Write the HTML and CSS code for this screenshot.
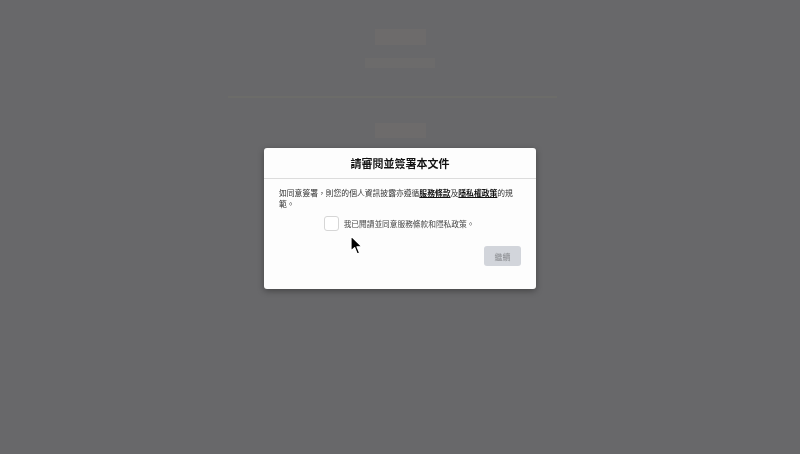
FILE: index.html
```html
<!DOCTYPE html>
<html>
<head>
  <link rel="stylesheet" href="styles.css">
</head>
<body>
  <div class="page">
    <div class="page-logo"></div>
    <div class="page-subtitle"></div>
    <div class="page-rule"></div>
    <div class="page-logo page-logo-low"></div>
  </div>

  <div class="overlay">
    <div class="modal">
      <div class="modal-header">請審閱並簽署本文件</div>
      <div class="modal-body">
        <p class="notice">如同意簽署，則您的個人資訊披露亦遵循<a href="#">服務條款</a>及<a href="#">隱私權政策</a>的規範。</p>
        <div class="agree-row">
          <span class="checkbox"></span>
          <label>我已閱讀並同意服務條款和隱私政策。</label>
        </div>
        <div class="actions">
          <button class="continue" disabled>繼續</button>
        </div>
      </div>
    </div>
  </div>

  <svg class="cursor" width="14" height="21" viewBox="0 0 14 21">
    <path d="M1 1 L1 16 L4.6 12.6 L7.2 19 L9.6 18 L7 11.8 L12 11.8 Z" fill="#000" stroke="#fff" stroke-width="1.2" stroke-linejoin="round"/>
  </svg>
</body>
</html>
```

FILE: styles.css
```css
body {
  margin: 0;
  font-family: "Noto Sans CJK TC", "Noto Sans", sans-serif;
  background: #68686a;
  height: 100vh;
  overflow: hidden;
}

.page {
  display: flex;
  flex-direction: column;
  align-items: center;
  padding-top: 29px;
}

.page-logo {
  width: 51px;
  height: 16px;
  background: #6d6b6b;
  margin-left: 1px;
}

.page-subtitle {
  width: 70px;
  height: 10px;
  margin-top: 13px;
  background: #6c6b6b;
}

.page-rule {
  width: 329px;
  height: 2px;
  margin-top: 28px;
  margin-right: 15px;
  background: #6c6c69;
}

.page-logo-low {
  margin-top: 25px;
  height: 15px;
}

.overlay {
  position: fixed;
  inset: 0;
  display: flex;
  justify-content: center;
  padding-top: 148px;
}

.modal {
  width: 272px;
  height: 141px;
  background: #fdfdfd;
  border-radius: 3px;
  box-shadow: 0 2px 6px rgba(0, 0, 0, 0.35);
  display: flex;
  flex-direction: column;
  align-self: flex-start;
}

.modal-header {
  height: 30px;
  line-height: 30px;
  text-align: center;
  font-size: 11px;
  font-weight: 700;
  color: #111;
  border-bottom: 1px solid #dcdcdc;
}

.modal-body {
  padding: 8px 15px 0;
}

.notice {
  margin: 0;
  font-size: 7.8px;
  line-height: 11px;
  color: #333;
}

.notice a {
  color: #111;
  font-weight: 700;
  text-decoration: underline;
}

.agree-row {
  display: flex;
  align-items: center;
  justify-content: center;
  margin-top: 7px;
  gap: 5px;
  margin-right: 2px;
}

.checkbox {
  width: 13px;
  height: 13px;
  border: 1px solid #d6d6d6;
  border-radius: 3px;
  background: #fff;
}

.agree-row label {
  font-size: 7.7px;
  color: #444;
}

.actions {
  display: flex;
  justify-content: flex-end;
  margin-top: 15px;
}

.continue {
  width: 37px;
  height: 20px;
  border: none;
  border-radius: 3px;
  background: #d2d5db;
  color: #8a8c90;
  font-family: inherit;
  font-size: 8px;
  padding: 0;
}

.cursor {
  position: absolute;
  left: 350px;
  top: 235px;
}
```
